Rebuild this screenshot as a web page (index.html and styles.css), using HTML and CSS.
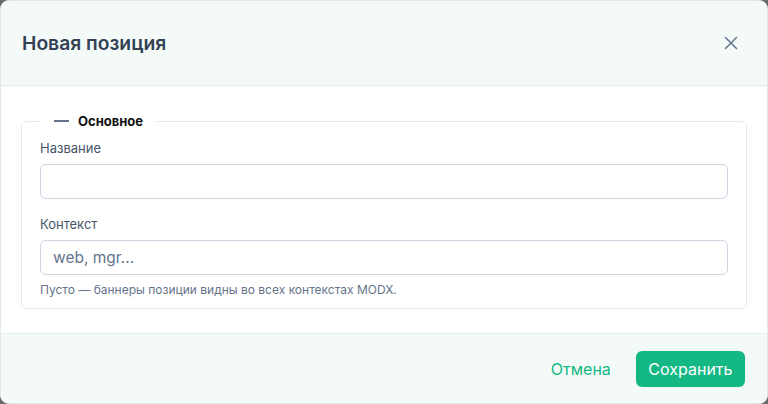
FILE: index.html
```html
<!DOCTYPE html>
<html lang="ru">
<head>
<meta charset="utf-8">
<title>Новая позиция</title>
<link rel="stylesheet" href="styles.css">
</head>
<body>
<div class="dialog">
  <header class="dialog-header">
    <h2 class="dialog-title">Новая позиция</h2>
    <button class="close-btn" type="button" aria-label="Закрыть">
      <svg width="16" height="16" viewBox="0 0 16 16" fill="none" stroke="currentColor" stroke-width="1.5" stroke-linecap="round">
        <path d="M2.5 2.5l11 11M13.5 2.5l-11 11"/>
      </svg>
    </button>
  </header>
  <div class="dialog-body">
    <fieldset class="group">
      <legend class="group-legend"><span class="legend-dash"></span>Основное</legend>
      <div class="field">
        <label class="field-label" for="name">Название</label>
        <input class="field-input" id="name" type="text">
      </div>
      <div class="field">
        <label class="field-label" for="ctx">Контекст</label>
        <input class="field-input" id="ctx" type="text" placeholder="web, mgr...">
        <p class="field-help">Пусто — баннеры позиции видны во всех контекстах MODX.</p>
      </div>
    </fieldset>
  </div>
  <footer class="dialog-footer">
    <button class="btn btn-link" type="button">Отмена</button>
    <button class="btn btn-primary" type="button">Сохранить</button>
  </footer>
</div>
</body>
</html>
```
FILE: styles.css
```css
* { box-sizing: border-box; }

html, body {
  margin: 0;
  height: 100%;
}

body {
  background: #6b6b6b;
  font-family: Inter, "Noto Sans", "Liberation Sans", sans-serif;
  color: #334155;
}

.dialog {
  width: 768px;
  height: 404px;
  background: #ffffff;
  border: 1px solid #e3e8ec;
  border-radius: 9px;
  overflow: hidden;
  display: flex;
  flex-direction: column;
}

.dialog-header {
  height: 85px;
  flex: none;
  background: #f4faf8;
  border-bottom: 1px solid #e6ebee;
  display: flex;
  align-items: center;
  justify-content: space-between;
  padding: 0 28px 0 21px;
}

.dialog-title {
  margin: 0;
  font-size: 19.3px;
  font-weight: 600;
  color: #334155;
}

.close-btn {
  border: 0;
  background: none;
  padding: 0;
  width: 16px;
  height: 16px;
  color: #64748b;
  display: flex;
  cursor: pointer;
}

.dialog-body {
  flex: 1;
  min-height: 0;
  padding: 27px 20px 0;
}

.group {
  margin: 0;
  border: 1px solid #e6eaee;
  border-radius: 6px;
  padding: 0 18px 0;
  height: 196px;
  min-width: 0;
}

.group-legend {
  padding: 0 13px 0 14px;
  margin-left: 0;
  font-size: 13px;
  font-weight: 700;
  color: #111111;
  display: flex;
  align-items: center;
  line-height: 16px;
}

.legend-dash {
  width: 15px;
  height: 2px;
  background: #64748b;
  margin-right: 9px;
}

.field:first-of-type {
  margin-top: 10px;
}

.field + .field {
  margin-top: 16px;
}

.field-label {
  display: block;
  font-size: 13px;
  line-height: 18px;
  color: #475569;
  margin-bottom: 7px;
}

.field-input {
  display: block;
  width: 100%;
  height: 35px;
  border: 1px solid #cdd5e0;
  border-radius: 6px;
  padding: 0 12px;
  font-family: inherit;
  font-size: 15.5px;
  color: #334155;
  background: #fff;
}

.field-input::placeholder {
  color: #64748b;
}

.field-help {
  margin: 7px 0 0;
  font-size: 12px;
  line-height: 16px;
  color: #64748b;
}

.dialog-footer {
  flex: none;
  height: 70px;
  background: #f4faf8;
  border-top: 1px solid #e6ebee;
  display: flex;
  align-items: center;
  justify-content: flex-end;
  gap: 13px;
  padding: 0 22px 0 0;
}

.btn {
  font-family: inherit;
  font-size: 16px;
  border: 0;
  border-radius: 6px;
  height: 36px;
  padding: 0 12px;
  cursor: pointer;
}

.btn-link {
  background: none;
  color: #13b884;
}

.btn-primary {
  background: #13b884;
  color: #ffffff;
  padding: 0 12.5px;
}
```
